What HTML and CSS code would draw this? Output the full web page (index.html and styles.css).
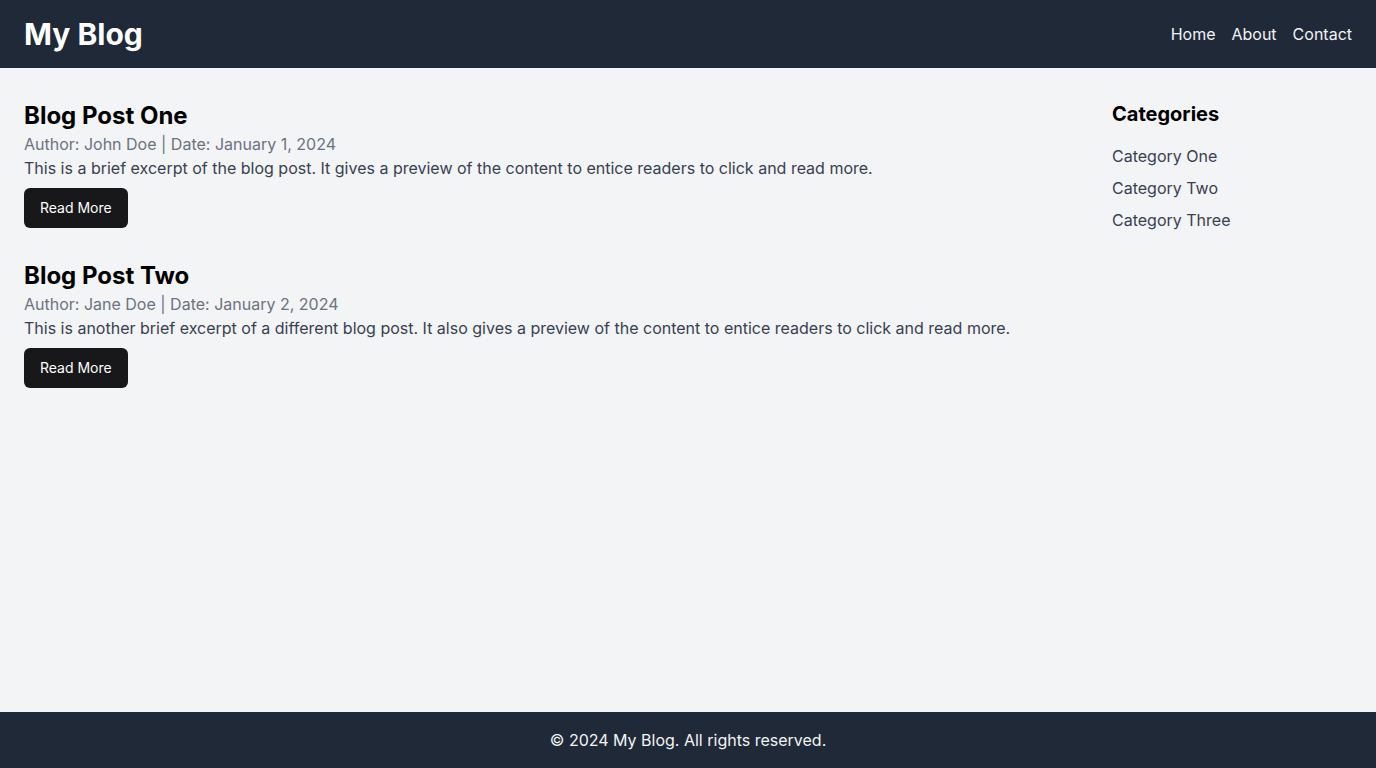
FILE: index.html
```html
<!DOCTYPE html>
<html lang="en">
<head>
<meta charset="utf-8">
<title>My Blog</title>
<link rel="stylesheet" href="styles.css">
</head>
<body>
<div class="page">
  <header class="site-header">
    <h1 class="logo">My Blog</h1>
    <nav class="nav">
      <a href="#">Home</a>
      <a href="#">About</a>
      <a href="#">Contact</a>
    </nav>
  </header>
  <div class="content">
    <main class="posts">
      <article class="post">
        <h2 class="post-title">Blog Post One</h2>
        <p class="meta">Author: John Doe | Date: January 1, 2024</p>
        <p class="excerpt">This is a brief excerpt of the blog post. It gives a preview of the content to entice readers to click and read more.</p>
        <a class="btn" href="#">Read More</a>
      </article>
      <article class="post">
        <h2 class="post-title">Blog Post Two</h2>
        <p class="meta">Author: Jane Doe | Date: January 2, 2024</p>
        <p class="excerpt">This is another brief excerpt of a different blog post. It also gives a preview of the content to entice readers to click and read more.</p>
        <a class="btn" href="#">Read More</a>
      </article>
    </main>
    <aside class="sidebar">
      <h3 class="side-title">Categories</h3>
      <ul class="cat-list">
        <li><a href="#">Category One</a></li>
        <li><a href="#">Category Two</a></li>
        <li><a href="#">Category Three</a></li>
      </ul>
    </aside>
  </div>
  <footer class="site-footer">© 2024 My Blog. All rights reserved.</footer>
</div>
</body>
</html>
```
FILE: styles.css
```css
* { box-sizing: border-box; }
html, body { margin: 0; padding: 0; }
body {
  font-family: Inter, "Noto Sans", sans-serif;
  font-size: 16px;
  line-height: 24px;
  background: #f3f4f6;
  color: #111827;
}
a { text-decoration: none; color: inherit; }
.page {
  min-height: 100vh;
  display: flex;
  flex-direction: column;
}
.site-header {
  background: #1f2937;
  color: #fff;
  display: flex;
  justify-content: space-between;
  align-items: center;
  padding: 16px 24px;
}
.logo {
  margin: 0;
  font-size: 30px;
  line-height: 36px;
  font-weight: 700;
}
.nav {
  display: flex;
  gap: 16px;
}
.nav a { color: #f3f4f6; }
.content {
  flex: 1;
  display: flex;
  gap: 32px;
  padding: 32px 24px;
}
.posts { flex: 1; }
.post { margin-bottom: 32px; }
.post-title {
  margin: 0;
  font-size: 24px;
  line-height: 32px;
  font-weight: 700;
  color: #000;
}
.meta {
  margin: 0;
  color: #6b7280;
}
.excerpt {
  margin: 0;
  color: #374151;
}
.btn {
  display: inline-block;
  margin-top: 8px;
  background: #18181b;
  color: #fff;
  font-size: 14px;
  line-height: 20px;
  font-weight: 400;
  padding: 10px 16px;
  border-radius: 6px;
}
.sidebar { width: 240px; }
.side-title {
  margin: 0 0 16px;
  font-size: 20px;
  line-height: 28px;
  font-weight: 700;
  color: #000;
}
.cat-list {
  list-style: none;
  margin: 0;
  padding: 0;
  display: flex;
  flex-direction: column;
  gap: 8px;
  color: #374151;
}
.site-footer {
  background: #1f2937;
  color: #f3f4f6;
  text-align: center;
  padding: 16px;
}
```
